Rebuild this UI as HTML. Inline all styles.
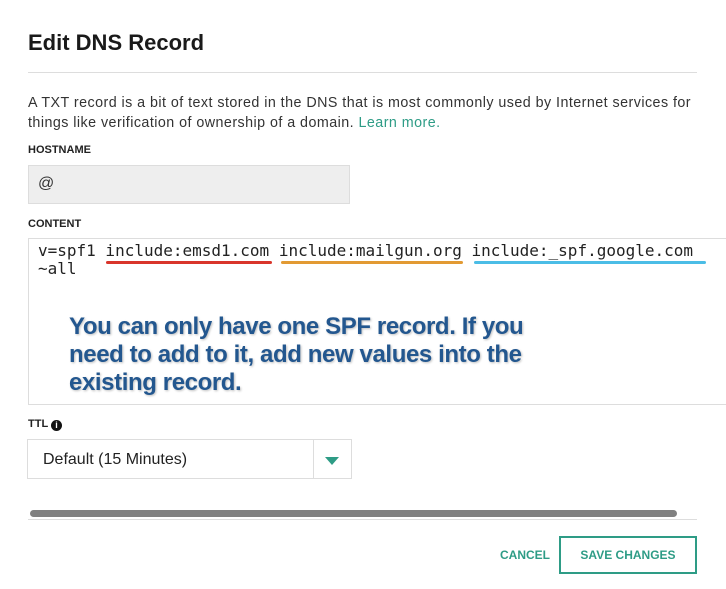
<!DOCTYPE html>
<html><head><style>
body{margin:0;width:726px;height:589px;background:#fff;font-family:"Liberation Sans",sans-serif;position:relative;overflow:hidden;color:#222}
.a{position:absolute}
</style></head><body>
<div class="a" style="left:28px;top:30px;font-size:22px;font-weight:bold;color:#1a1a1a">Edit DNS Record</div>
<div class="a" style="left:28px;top:72px;width:669px;height:1px;background:#ddd"></div>
<div class="a" style="left:28px;top:94px;width:700px;font-size:14.3px;line-height:19.5px;color:#333;letter-spacing:0.45px;white-space:nowrap">A TXT record is a bit of text stored in the DNS that is most commonly used by Internet services for<br>things like verification of ownership of a domain. <span style="color:#2e9c86">Learn more.</span></div>
<div class="a" style="left:28px;top:144px;font-size:11px;font-weight:bold;color:#222">HOSTNAME</div>
<div class="a" style="left:28px;top:165px;width:322px;height:39px;background:#eee;border:1px solid #ddd;box-sizing:border-box"></div>
<div class="a" style="left:38px;top:175px;font-size:16px;color:#333">@</div>
<div class="a" style="left:28px;top:218px;font-size:11px;font-weight:bold;color:#222">CONTENT</div>
<div class="a" style="left:28px;top:238px;width:710px;height:167px;border:1px solid #ddd;box-sizing:border-box"></div>
<div class="a" style="left:38px;top:242px;font-family:'DejaVu Sans Mono','Liberation Mono',monospace;font-size:16px;line-height:18px;color:#222;white-space:pre">v=spf1 include:emsd1.com include:mailgun.org include:_spf.google.com
~all</div>
<div class="a" style="left:106px;top:261px;width:166px;height:3px;background:#d9352b;border-radius:2px"></div>
<div class="a" style="left:281px;top:261px;width:182px;height:3px;background:#e29a33;border-radius:2px"></div>
<div class="a" style="left:474px;top:261px;width:232px;height:3px;background:#4bbde6;border-radius:2px"></div>
<div class="a" style="left:69px;top:313px;font-size:24px;font-weight:bold;line-height:28px;color:#23578f;letter-spacing:-0.4px;text-shadow:1px 1px 2px rgba(0,0,0,.25);white-space:nowrap">You can only have one SPF record. If you<br>need to add to it, add new values into the<br>existing record.</div>
<div class="a" style="left:28px;top:418px;font-size:11px;font-weight:bold;color:#222">TTL <span style="display:inline-block;width:11px;height:11px;border-radius:50%;background:#111;color:#fff;font-size:9px;text-align:center;line-height:11px;vertical-align:-1px">i</span></div>
<div class="a" style="left:27px;top:439px;width:325px;height:40px;border:1px solid #ddd;box-sizing:border-box"></div>
<div class="a" style="left:313px;top:440px;width:1px;height:38px;background:#ddd"></div>
<div class="a" style="left:43px;top:451px;font-size:16px;color:#222">Default (15 Minutes)</div>
<div class="a" style="left:325px;top:457px;width:0;height:0;border-left:7px solid transparent;border-right:7px solid transparent;border-top:8px solid #2e9c86"></div>
<div class="a" style="left:30px;top:510px;width:647px;height:7px;background:#808080;border-radius:4px"></div>
<div class="a" style="left:28px;top:519px;width:669px;height:1px;background:#ddd"></div>
<div class="a" style="left:500px;top:548px;font-size:12px;font-weight:bold;color:#2e9c86">CANCEL</div>
<div class="a" style="left:559px;top:536px;width:138px;height:38px;border:2px solid #2e9c86;box-sizing:border-box;font-size:12px;font-weight:bold;color:#2e9c86;text-align:center;line-height:34px">SAVE CHANGES</div>
</body></html>
